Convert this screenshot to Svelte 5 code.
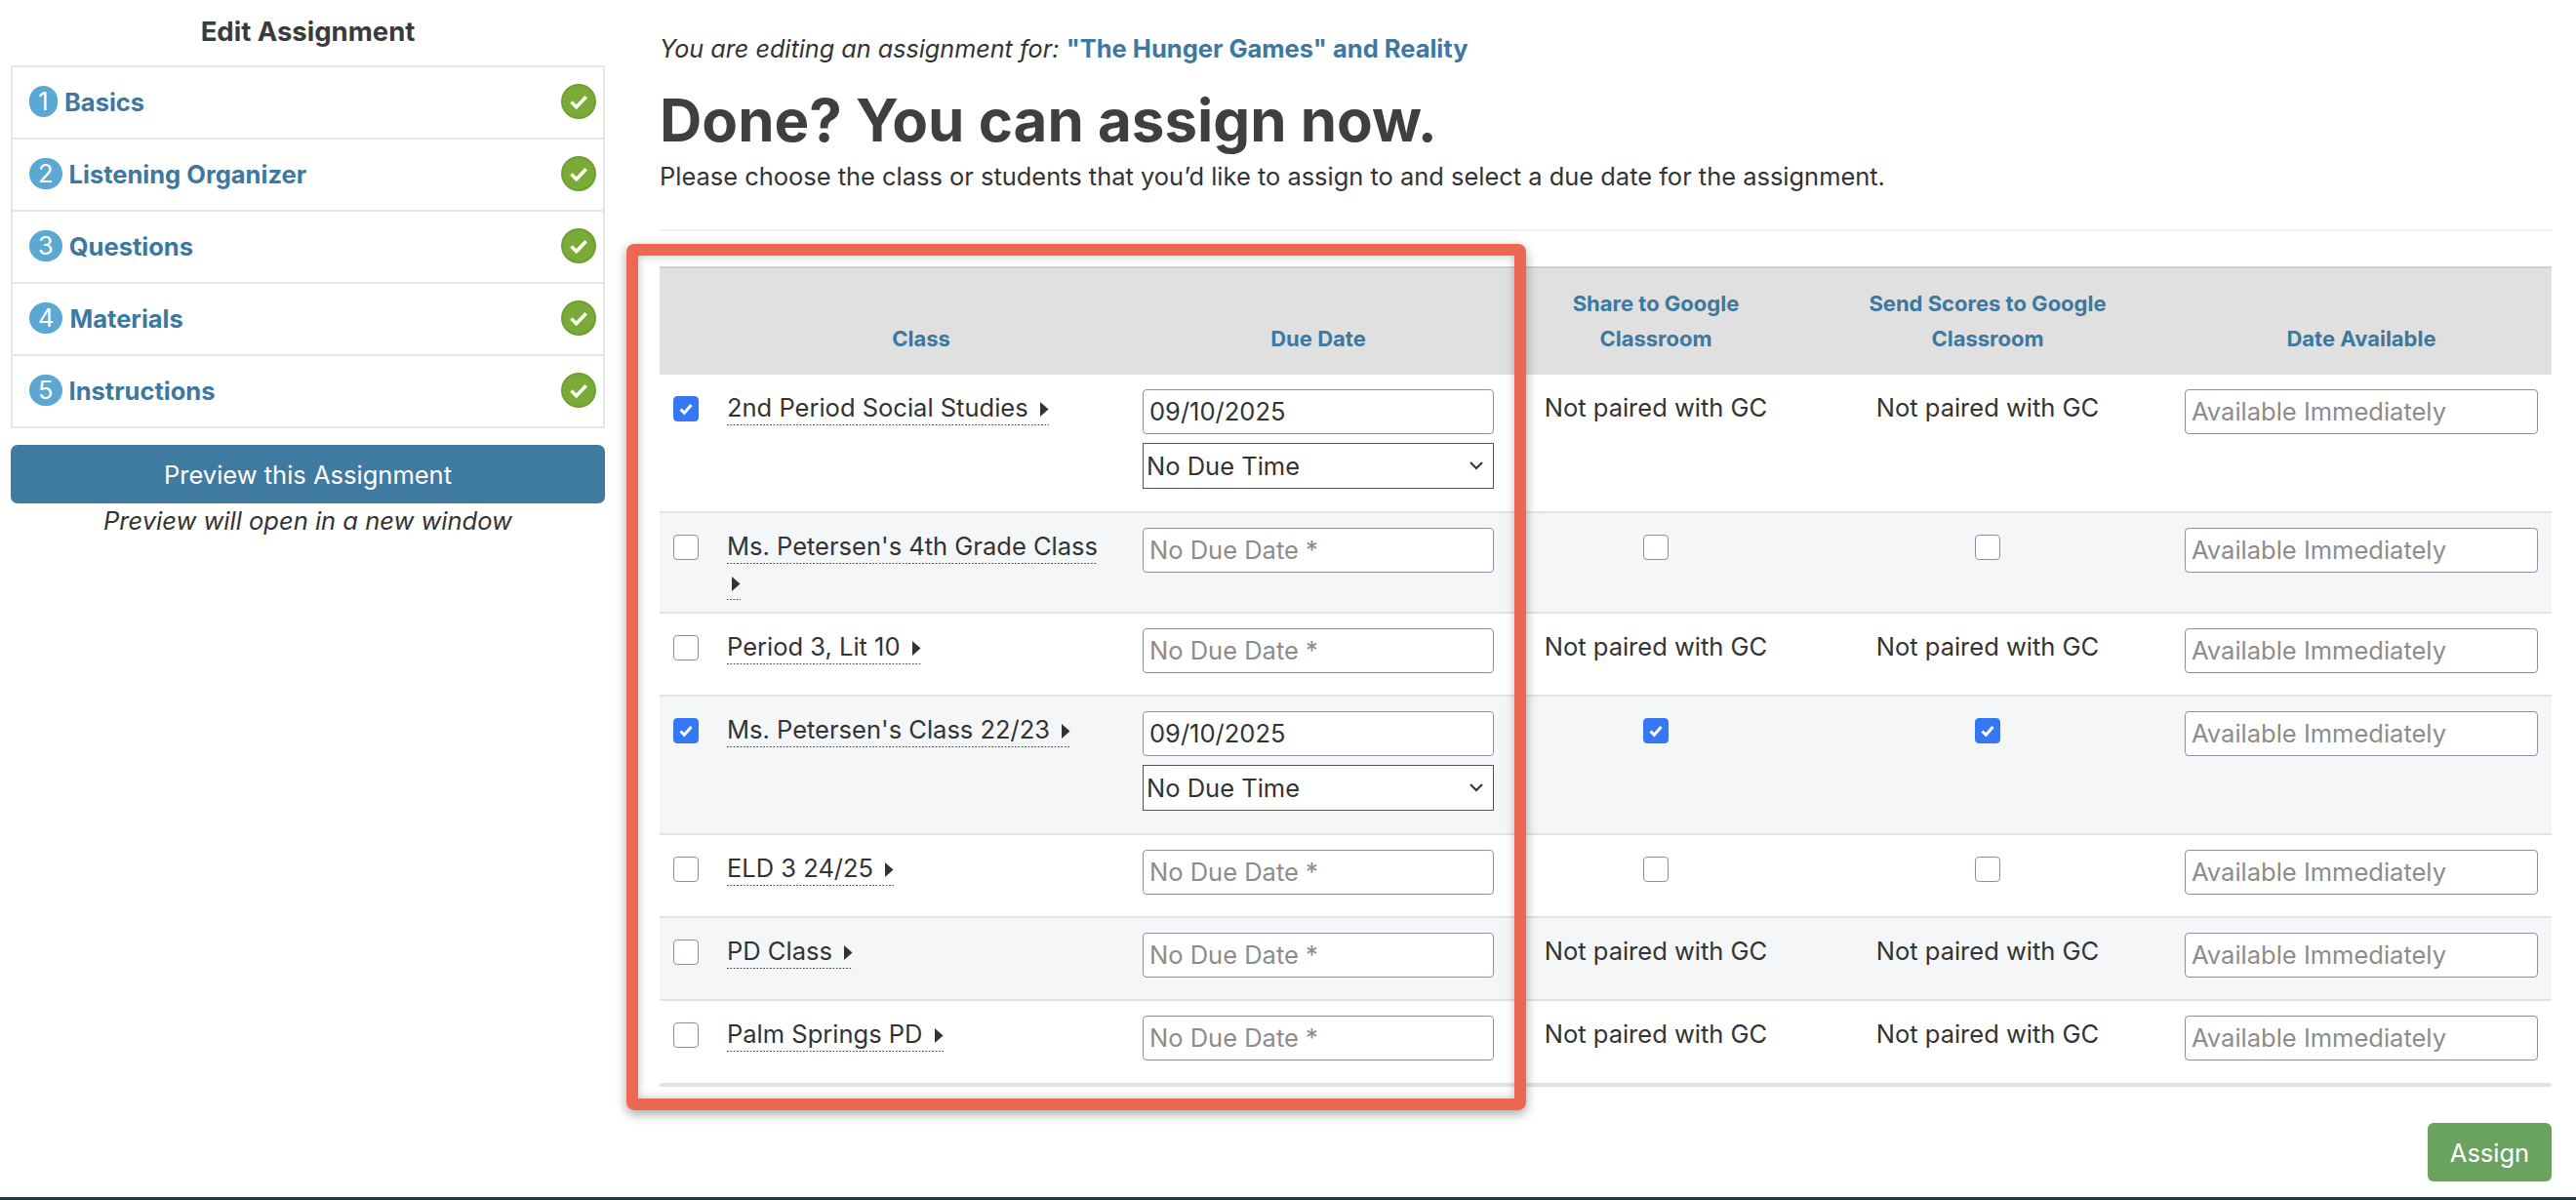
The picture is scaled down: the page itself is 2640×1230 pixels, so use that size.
<script lang="ts">
  const steps = ["Basics", "Listening Organizer", "Questions", "Materials", "Instructions"];

  interface ClassRow {
    name: string;
    date: string;
    /** null when the class isn't paired with Google Classroom */
    gc: boolean | null;
  }

  const rows: ClassRow[] = [
    { name: "2nd Period Social Studies", date: "09/10/2025", gc: null },
    { name: "Ms. Petersen's 4th Grade Class", date: "", gc: false },
    { name: "Period 3, Lit 10", date: "", gc: null },
    { name: "Ms. Petersen's Class 22/23", date: "09/10/2025", gc: true },
    { name: "ELD 3 24/25", date: "", gc: false },
    { name: "PD Class", date: "", gc: null },
    { name: "Palm Springs PD", date: "", gc: null },
  ];
</script>

<div class="page">
  <div class="columns">
    <aside class="sidebar">
      <h3>Edit Assignment</h3>
      <ul class="steps">
        {#each steps as step, i}
          <li>
            <span class="num">{i + 1}</span>
            <a href="#step">{step}</a>
            <svg class="done" viewBox="0 0 36 36" aria-hidden="true">
              <circle cx="18" cy="18" r="18" fill="#6f9f30" />
              <circle cx="18" cy="18" r="16" fill="#7aab38" />
              <path d="M10.5 18.5l5.2 5.2 10-10.4" fill="none" stroke="#fff" stroke-width="3.6" />
            </svg>
          </li>
        {/each}
      </ul>
      <button class="preview" type="button">Preview this Assignment</button>
      <p class="note">Preview will open in a new window</p>
    </aside>

    <main class="content">
      <p class="editing"><em>You are editing an assignment for:</em> <a href="#text">"The Hunger Games" and Reality</a></p>
      <h1>Done? You can assign now.</h1>
      <p class="lead">Please choose the class or students that you’d like to assign to and select a due date for the assignment.</p>
      <hr />

      <div class="table-wrap">
        <table>
          <colgroup>
            <col style="width: 55px" />
            <col style="width: 426px" />
            <col style="width: 388px" />
            <col style="width: 304px" />
            <col style="width: 376px" />
            <col style="width: 390px" />
          </colgroup>
          <thead>
            <tr>
              <th></th>
              <th>Class</th>
              <th>Due Date</th>
              <th>Share to Google Classroom</th>
              <th>Send Scores to Google Classroom</th>
              <th>Date Available</th>
            </tr>
          </thead>
          <tbody>
            {#each rows as row}
              <tr>
                <td class="check"><input type="checkbox" checked={!!row.date} /></td>
                <td class="name">
                  <a href="#class">{row.name} <svg class="caret" viewBox="0 0 14 17" aria-hidden="true"><path d="M5 1l8.5 7.5-8.5 7.5z" fill="#333" /></svg></a>
                </td>
                <td>
                  <input class="field" type="text" placeholder="No Due Date *" value={row.date} />
                  {#if row.date}
                    <select class="time"><option>No Due Time</option></select>
                  {/if}
                </td>
                <td class="gc">
                  {#if row.gc === null}
                    Not paired with GC
                  {:else}
                    <input class="gc-box" type="checkbox" checked={row.gc} />
                  {/if}
                </td>
                <td class="gc">
                  {#if row.gc === null}
                    Not paired with GC
                  {:else}
                    <input class="gc-box" type="checkbox" checked={row.gc} />
                  {/if}
                </td>
                <td><input class="field" type="text" placeholder="Available Immediately" /></td>
              </tr>
            {/each}
          </tbody>
        </table>
        <div class="highlight" aria-hidden="true"></div>
      </div>

      <div class="actions">
        <button class="assign" type="button">Assign</button>
      </div>
    </main>
  </div>
  <div class="footer-bar"></div>
</div>

<style>
  :global(body) {
    margin: 0;
    background: #fff;
    color: #333;
    font-family: Inter, "Liberation Sans", sans-serif;
    font-size: 25.5px;
  }
  * {
    box-sizing: border-box;
  }
  a {
    text-decoration: none;
  }
  .page {
    display: flex;
    flex-direction: column;
    height: 1230px;
    overflow: hidden;
  }
  .columns {
    flex: 1;
    display: flex;
    padding: 0 25px 0 11px;
    gap: 56px;
  }
  .footer-bar {
    height: 3px;
    background: #1b3a4b;
  }

  /* sidebar */
  .sidebar {
    width: 609px;
    flex: none;
  }
  h3 {
    margin: 16px 0 0;
    height: 51px;
    line-height: 32px;
    text-align: center;
    font-size: 27.5px;
    font-weight: 700;
    color: #3a3a3a;
  }
  .steps {
    list-style: none;
    margin: 0;
    padding: 0;
    border: 2px solid #e6e6e6;
    border-bottom: 0;
  }
  .steps li {
    display: flex;
    align-items: center;
    height: 74px;
    padding: 0 7px 2px 17px;
    border-bottom: 2px solid #e6e6e6;
    font-weight: 700;
  }
  .num {
    min-width: 29px;
    height: 32px;
    padding: 0 9px;
    margin-right: 7px;
    border-radius: 16px;
    background: #5ba8d3;
    color: #fff;
    font-weight: 400;
    line-height: 32px;
    text-align: center;
  }
  .steps a {
    flex: 1;
    color: #3c789f;
  }
  .done {
    width: 36px;
    height: 36px;
  }
  .preview {
    display: block;
    width: 100%;
    height: 60px;
    margin-top: 17px;
    border: 0;
    border-radius: 7px;
    background: #3f7aa0;
    color: #fff;
    font: inherit;
  }
  .note {
    margin: 2px 0 0;
    line-height: 32px;
    text-align: center;
    font-style: italic;
  }

  /* main column */
  .content {
    flex: 1;
    min-width: 0;
  }
  .editing {
    margin: 34px 0 0;
    line-height: 32px;
  }
  .editing em {
    font-size: 25.2px;
  }
  .editing a {
    font-weight: 700;
    color: #3c789f;
  }
  h1 {
    margin: 21px 0 0;
    line-height: 72px;
    font-size: 60px;
    font-weight: 700;
    color: #3f3f3f;
  }
  .lead {
    margin: 6px 0 0;
    line-height: 32px;
    font-size: 25.45px;
  }
  hr {
    height: 2px;
    margin: 38px 0 36px;
    border: 0;
    background: #efefef;
  }
  .table-wrap {
    position: relative;
  }
  table {
    width: 100%;
    table-layout: fixed;
    border-collapse: separate;
    border-spacing: 0;
  }
  th {
    padding: 18px 14px 19px;
    vertical-align: bottom;
    background: #e0e0e0;
    border-top: 2px solid #cfcfcf;
    color: #3c789f;
    font-size: 22px;
    font-weight: 700;
    line-height: 36px;
  }
  td {
    padding: 15px 14px 22px;
    vertical-align: top;
    border-bottom: 2px solid #e2e3e5;
  }
  tbody tr:nth-child(even) td {
    background: #f5f6f8;
  }
  tbody tr:last-child td {
    padding-bottom: 23px;
    border-bottom-width: 4px;
  }
  td.name {
    padding-bottom: 12px;
    line-height: 37px;
  }
  td.name a {
    padding-bottom: 3px;
    background: linear-gradient(90deg, #444 50%, transparent 50%) left bottom / 3.4px 1.5px repeat-x;
    color: #333;
  }
  .caret {
    display: inline-block;
    width: 14px;
    height: 17px;
    vertical-align: -1px;
  }
  td.check {
    padding-top: 22px;
  }
  td.gc {
    line-height: 37px;
    text-align: center;
  }
  input[type="checkbox"] {
    appearance: none;
    display: block;
    width: 26px;
    height: 26px;
    margin: 0;
    border: 1.5px solid #8f8f9d;
    border-radius: 4px;
    background: #fff center / 20px 20px no-repeat;
  }
  input[type="checkbox"]:checked {
    border-color: #3478f6;
    background-color: #3478f6;
    background-image: url("data:image/svg+xml,%3Csvg xmlns='http://www.w3.org/2000/svg' viewBox='0 0 20 20'%3E%3Cpath d='M4.5 10.5l3.8 3.8 7.2-8.3' fill='none' stroke='%23fff' stroke-width='3'/%3E%3C/svg%3E");
  }
  .gc-box {
    margin: 7px auto 0 !important;
  }
  .field {
    display: block;
    width: 100%;
    height: 46px;
    padding: 0 6px 1px;
    border: 1.5px solid #8f8f9d;
    border-radius: 4px;
    background: #fff;
    color: #333;
    font: inherit;
  }
  .field::placeholder {
    color: #8c8c8c;
    opacity: 1;
  }
  .time {
    appearance: none;
    display: block;
    width: 100%;
    height: 47px;
    margin: 9px 0 1px;
    padding: 0 0 0 3px;
    border: 1.5px solid #555;
    border-radius: 0;
    background: #fff url("data:image/svg+xml,%3Csvg xmlns='http://www.w3.org/2000/svg' viewBox='0 0 14 9'%3E%3Cpath d='M1 1l6 6 6-6' fill='none' stroke='%23333' stroke-width='2'/%3E%3C/svg%3E") right 10px center / 14px 9px no-repeat;
    color: #333;
    font: inherit;
  }
  .highlight {
    position: absolute;
    top: -23px;
    left: -34px;
    width: 922px;
    height: 888px;
    border: 12px solid #ec6854;
    border-radius: 8px;
    box-shadow:
      0 4px 12px rgb(0 0 0 / 0.35),
      inset 0 0 10px rgb(0 0 0 / 0.25);
    pointer-events: none;
  }
  .actions {
    display: flex;
    justify-content: flex-end;
    margin-top: 37px;
  }
  .assign {
    width: 127px;
    height: 60px;
    border: 0;
    border-radius: 6px;
    background: #6aa35f;
    color: #fff;
    font: inherit;
  }
</style>
